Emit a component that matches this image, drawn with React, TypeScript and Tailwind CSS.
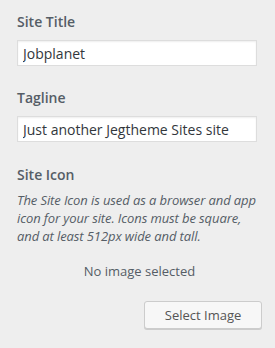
export default function App() {
  return (
    <div
      className="min-h-[348px] w-[275px] bg-[#eeeeee] pl-[17px] pr-[13px] pt-3 text-[#555d66]"
      style={{ fontFamily: '"Open Sans", sans-serif' }}
    >
      {/* Site Title */}
      <label className="block text-[14px] leading-5 font-semibold">Site Title</label>
      <input
        defaultValue="Jobplanet"
        className="mt-2 block h-[26px] w-[240px] border border-[#dddddd] bg-white px-[5px] text-[14px] text-[#32373c] shadow-[inset_0_1px_2px_rgba(0,0,0,0.07)] outline-none"
      />

      {/* Tagline */}
      <label className="mt-[22px] block text-[14px] leading-5 font-semibold">Tagline</label>
      <input
        defaultValue="Just another Jegtheme Sites site"
        className="mt-2 block h-[26px] w-[240px] border border-[#dddddd] bg-white px-[5px] text-[14px] text-[#32373c] shadow-[inset_0_1px_2px_rgba(0,0,0,0.07)] outline-none"
      />

      {/* Site Icon */}
      <div className="mt-[23px] text-[14px] leading-5 font-semibold">Site Icon</div>
      <p className="mt-[6px] text-[13px] leading-[18px] italic tracking-[-0.1px] text-[#555d66]">
        The Site Icon is used as a browser and app icon for your site. Icons must be square, and at least 512px wide and tall.
      </p>

      <p className="mt-[17px] text-center text-[13px] leading-[18px] text-[#555d66]">No image selected</p>

      <div className="mt-[21px] flex justify-end">
        <button className="h-[28px] w-[118px] rounded-[3px] border border-[#cccccc] bg-[#f7f7f7] text-[13px] leading-[26px] text-[#555555] shadow-[0_1px_0_#cccccc]">
          Select Image
        </button>
      </div>
    </div>
  )
}
